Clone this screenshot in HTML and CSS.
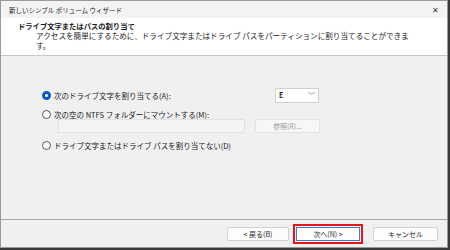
FILE: index.html
```html
<!DOCTYPE html>
<html lang="ja">

<head>
  <meta charset="UTF-8" />
  <title>新しいシンプル ボリューム ウィザード</title>
  <link rel="stylesheet" href="styles.css">
</head>

<body>
  <div class="window">
    <div class="titlebar">
      <span class="title">新しいシンプル ボリューム ウィザード</span>
      <span class="close">&#x2715;</span>
    </div>

    <div class="header">
      <div class="header-title">ドライブ文字またはパスの割り当て</div>
      <div class="header-sub">
        <span class="line">アクセスを簡単にするために、ドライブ文字またはドライブ パスをパーティションに割り当てることができま</span>
        <span class="line">す。</span>
      </div>
    </div>

    <div class="body">
      <div class="option">
        <span class="radio checked"></span>
        <span class="label">次のドライブ文字を割り当てる(A):</span>
        <div class="select">E <span class="chev">&#xFE40;</span></div>
      </div>
      <div class="option">
        <span class="radio"></span>
        <span class="label">次の空の NTFS フォルダーにマウントする(M):</span>
      </div>
      <div class="mount-row">
        <div class="textbox"></div>
        <div class="browse">参照(R)...</div>
      </div>
      <div class="option last">
        <span class="radio"></span>
        <span class="label">ドライブ文字またはドライブ パスを割り当てない(D)</span>
      </div>
    </div>

    <div class="footer">
      <button class="btn">&lt; 戻る(B)</button>
      <div class="highlight">
        <button class="btn primary">次へ(N) &gt;</button>
      </div>
      <button class="btn cancel">キャンセル</button>
    </div>
  </div>
</body>

</html>
```

FILE: styles.css
```css
body {
  margin: 0;
  padding: 0;
  background: #3a3a3a;
  font-family: "Noto Sans CJK JP", "Noto Sans", sans-serif;
  font-size: 7.5px;
  color: #1a1a1a;
}

.window {
  width: 446px;
  height: 246px;
  border: 1px solid #9a9a9a;
  background: #f0f0f0;
  display: flex;
  flex-direction: column;
}

.titlebar {
  height: 17px;
  flex-shrink: 0;
  display: flex;
  align-items: center;
  justify-content: space-between;
  padding: 0 8px 0 8px;
  background: #f3f3f3;
  font-size: 6.5px;
}

.close {
  font-size: 8px;
  color: #333;
}

.header {
  flex-shrink: 0;
  background: #fff;
  border-bottom: 1px solid #c8c8c8;
  padding: 4px 0 0 17px;
  box-sizing: border-box;
  height: 38px;
}

.header-title {
  font-weight: bold;
  font-size: 7.3px;
  line-height: 9px;
}

.header-sub {
  padding: 0 10px 0 18px;
  font-size: 7.6px;
  line-height: 10px;
  color: #222;
  white-space: nowrap;
}

.header-sub .line {
  display: block;
}

.body {
  flex: 1;
  padding: 32px 0 0 41px;
  border-bottom: 1px solid #a8a8a8;
}

.option {
  display: flex;
  align-items: center;
  height: 14px;
  margin-bottom: 5px;
}

.radio {
  width: 7px;
  height: 7px;
  border: 1px solid #555;
  border-radius: 50%;
  background: #fff;
  margin-right: 3px;
  box-sizing: content-box;
}

.radio.checked {
  width: 3px;
  height: 3px;
  border: 3px solid #0a5cc2;
}

.select {
  margin-left: auto;
  margin-right: 128px;
  width: 36px;
  height: 13px;
  border: 1px solid #cfcfcf;
  background: #fff;
  display: flex;
  align-items: center;
  justify-content: space-between;
  padding: 0 3px;
  font-weight: bold;
  font-size: 7px;
}

.chev {
  color: #666;
  font-weight: normal;
  font-size: 7px;
}

.mount-row {
  display: flex;
  align-items: center;
  margin: -7px 0 0 16px;
  height: 14px;
}

.textbox {
  width: 185px;
  height: 12px;
  border: 1px solid #e2e2e2;
  background: #f4f4f4;
}

.browse {
  margin-left: 10px;
  width: 63px;
  height: 12px;
  border: 1px solid #e4e4e4;
  border-radius: 2px;
  background: #f7f7f7;
  color: #9a9a9a;
  font-size: 7px;
  display: flex;
  align-items: center;
  justify-content: center;
}

.option.last {
  margin-top: 5px;
}

.footer {
  flex-shrink: 0;
  height: 27px;
  display: flex;
  align-items: center;
  justify-content: flex-end;
  padding: 0 9px 0 0;
}

.btn {
  font-family: inherit;
  font-size: 7px;
  height: 14px;
  padding: 0;
  width: 62px;
  border: 1px solid #d0d0d0;
  border-radius: 2px;
  background: #fdfdfd;
  color: #222;
  margin-left: 6px;
  display: flex;
  align-items: center;
  justify-content: center;
}

.highlight {
  margin-left: 4px;
  border: 2px solid #e8141b;
  padding: 1px;
  display: flex;
}

.btn.primary {
  margin-left: 0;
  width: 64px;
  border: 1px solid #3c7fd0;
  border-radius: 0;
}

.btn.cancel {
  margin-left: 10px;
  width: 65px;
}
```
